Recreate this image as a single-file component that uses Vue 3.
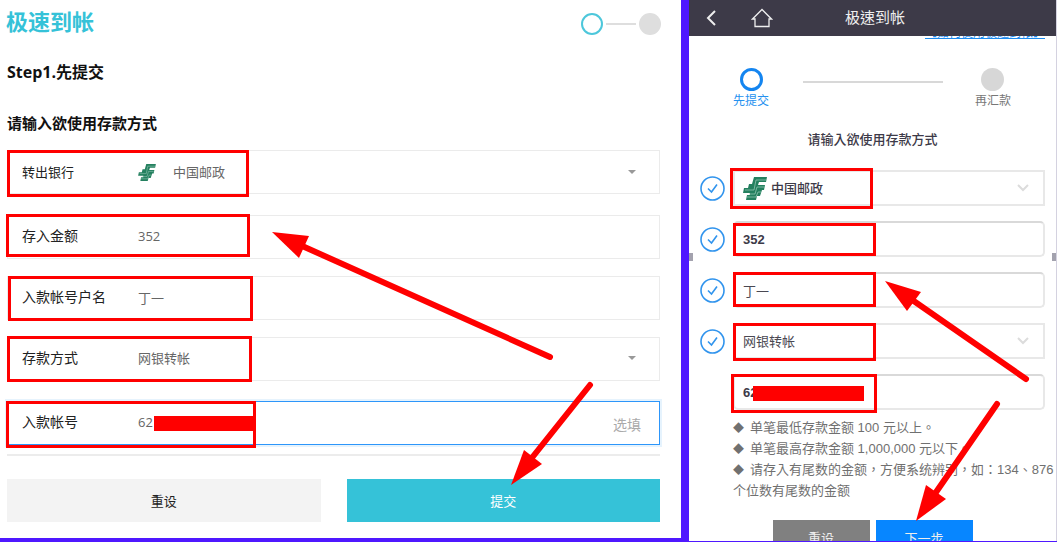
<script setup>
import { ref } from 'vue'

const desktopFields = ref([
  { id: 'd-bank', label: '转出银行', type: 'select', value: '中国邮政', bank: true },
  { id: 'd-amount', label: '存入金额', type: 'text', value: '352' },
  { id: 'd-name', label: '入款帐号户名', type: 'text', value: '丁一' },
  { id: 'd-method', label: '存款方式', type: 'select', value: '网银转帐' },
  { id: 'd-account', label: '入款帐号', type: 'text', value: '62', active: true, hint: '选填' },
])

const mobileFields = ref([
  { id: 'm-bank', label: '转出银行', type: 'select', value: '中国邮政', bank: true, checked: true },
  { id: 'm-amount', label: '存入金额', type: 'text', value: '352', checked: true },
  { id: 'm-name', label: '入款帐号户名', type: 'text', value: '丁一', checked: true, light: true },
  { id: 'm-method', label: '存款方式', type: 'select', value: '网银转帐', checked: true, light: true },
  { id: 'm-account', label: '入款帐号', type: 'text', value: '62' },
])

const frames = [
  [7, 150, 249, 197], [6, 214, 250, 257], [8, 276, 253, 321], [7, 336, 252, 382], [6, 401, 256, 448],
  [730, 168, 873, 209], [733, 223, 876, 256], [733, 272, 876, 307], [733, 323, 876, 361], [731, 374, 877, 413],
]
const arrows = [
  { line: [550, 357, 300, 245], head: '272,232 309,236 299,258' },
  { line: [590, 385, 527, 464], head: '511,485 524,450 542,464' },
  { line: [1026, 379, 908, 297], head: '885,281 921,292 907,311' },
  { line: [997, 404, 932, 498], head: '916,521 926,485 946,499' },
]
</script>

<template>
  <div class="page">
    <main class="desktop">
      <header class="top">
        <h1>极速到帐</h1>
        <div class="progress"><i class="dot on"></i><i class="link"></i><i class="dot"></i></div>
      </header>
      <h2>Step1.先提交</h2>
      <h3>请输入欲使用存款方式</h3>
      <form @submit.prevent>
        <div v-for="f in desktopFields" :key="f.id" class="field" :class="[f.id, { active: f.active }]">
          <label :for="f.id">{{ f.label }}</label>
          <svg v-if="f.bank" class="bank" viewBox="0 0 24 23" aria-hidden="true">
            <path class="mark" d="M11 0H24L23 5H16L15 8H22L21 13H19L17 19H14L13 23H3L4 18H7V16H0L1 11H5L6 7H9Z" />
            <path class="cut" d="M23 3H13L11 13H2M21 10H14L12 17H6M4 20H13L15 15H18" />
          </svg>
          <select v-if="f.type === 'select'" :id="f.id" v-model="f.value"><option>{{ f.value }}</option></select>
          <input v-else :id="f.id" v-model="f.value" type="text" />
          <i v-if="f.type === 'select'" class="caret"></i>
          <span v-if="f.hint" class="hint">{{ f.hint }}</span>
        </div>
        <hr />
        <div class="actions">
          <button type="reset">重设</button>
          <button type="submit" class="primary">提交</button>
        </div>
      </form>
    </main>

    <section class="mobile">
      <header class="bar">
        <button class="back" aria-label="返回">
          <svg width="12" height="18" viewBox="0 0 12 18"><path d="M10 2L3 9L10 16" /></svg>
        </button>
        <button class="home" aria-label="首页">
          <svg width="22" height="20" viewBox="0 0 22 20"><path d="M4 11H1.5L11 1.5L20.500 11H18V18.500H4Z" /></svg>
        </button>
        <strong>极速到帐</strong>
      </header>
      <div class="guide"><a href="#">【如何使用极速到帐】</a></div>
      <div class="steps">
        <div class="step on"><i></i><span>先提交</span></div>
        <i class="rule"></i>
        <div class="step"><i></i><span>再汇款</span></div>
      </div>
      <h3>请输入欲使用存款方式</h3>
      <form @submit.prevent>
        <div v-for="f in mobileFields" :key="f.id" class="row">
          <span class="tick">
            <svg v-if="f.checked" width="26" height="26" viewBox="0 0 26 26" aria-hidden="true">
              <circle cx="12.500" cy="13.500" r="11.500" /><path d="M8 13.500L11.500 17L17 9.500" />
            </svg>
          </span>
          <div class="box" :class="[f.type, { light: f.light }]">
            <svg v-if="f.bank" class="bank" viewBox="0 0 24 23" aria-hidden="true">
              <path class="mark" d="M11 0H24L23 5H16L15 8H22L21 13H19L17 19H14L13 23H3L4 18H7V16H0L1 11H5L6 7H9Z" />
              <path class="cut" d="M23 3H13L11 13H2M21 10H14L12 17H6M4 20H13L15 15H18" />
            </svg>
            <select v-if="f.type === 'select'" :id="f.id" v-model="f.value" :aria-label="f.label"><option>{{ f.value }}</option></select>
            <input v-else :id="f.id" v-model="f.value" type="text" :aria-label="f.label" />
            <svg v-if="f.type === 'select'" class="chev" width="12" height="8" viewBox="0 0 12 8"><path d="M1 1L6 6L11 1" /></svg>
          </div>
        </div>
        <div class="notes">
          <p><span class="gem">◆</span>单笔最低存款金额 100 元以上。</p>
          <p><span class="gem">◆</span>单笔最高存款金额 1,000,000 元以下。</p>
          <p><span class="gem">◆</span>请存入有尾数的金额，方便系统辨别，如：134、876<br />个位数有尾数的金额</p>
        </div>
        <div class="actions">
          <button type="reset">重设</button>
          <button type="submit" class="primary">下一步</button>
        </div>
      </form>
      <i class="grip left"></i>
      <i class="grip right"></i>
    </section>

    <svg class="marks" viewBox="0 0 1057 542" preserveAspectRatio="none" aria-hidden="true">
      <rect v-for="(b, i) in frames" :key="i" class="frame" :x="b[0] + 1.5" :y="b[1] + 1.5" :width="b[2] - b[0] - 3" :height="b[3] - b[1] - 3" />
      <rect class="solid" x="154" y="416" width="102" height="15" />
      <rect class="solid" x="753" y="386" width="111" height="15" />
      <g v-for="(a, i) in arrows" :key="'a' + i">
        <line :x1="a.line[0]" :y1="a.line[1]" :x2="a.line[2]" :y2="a.line[3]" />
        <polygon class="solid" :points="a.head" />
      </g>
    </svg>
  </div>
</template>

<style>
body { margin: 0; }
</style>

<style scoped>
* { box-sizing: border-box; }
.page {
  position: relative;
  display: grid;
  grid-template-columns: minmax(0, 681fr) 8px minmax(0, 368fr);
  height: 100vh;
  overflow: hidden;
  background: #4f18ff;
  font-family: "Open Sans", "Noto Sans CJK SC", sans-serif;
}
h1, h2, h3, p { margin: 0; }
button, input, select { font: inherit; color: inherit; border: 0; padding: 0; margin: 0; background: none; border-radius: 0; }
input, select { flex: 1; min-width: 0; appearance: none; outline: 0; height: 100%; opacity: 1; }

.desktop { background: #fff; padding: 7px 21px 0 6px; margin-bottom: 4px; }
.desktop form, .desktop h2, .desktop h3 { margin-left: 1px; }
.top { display: flex; justify-content: space-between; align-items: center; height: 28px; }
.top h1 { font-size: 22px; line-height: 28px; font-weight: 700; color: #35c2d8; }
.progress { display: flex; align-items: center; gap: 3px; padding-top: 6px; margin-right: -1px; }
.dot { width: 22px; height: 22px; border-radius: 50%; background: #dedede; }
.dot.on { background: #fff; border: 2px solid #4dc7db; }
.link { width: 30px; height: 2px; background: #dedede; }
.desktop h2 { margin-top: 25px; font-size: 16px; line-height: 24px; font-weight: 700; color: #111; }
.desktop h3 { margin-top: 27px; font-size: 15px; line-height: 24px; font-weight: 600; color: #111; }
.desktop form { margin-top: 15px; }
.field { display: flex; align-items: center; height: 44px; margin-bottom: 17px; padding: 0 18px 2px 14px; border: 1px solid #ebebeb; font-size: 13px; color: #666; }
.field.d-bank { margin-bottom: 21px; padding-bottom: 0; }
.field.d-method { margin-bottom: 20px; }
.field label { width: 116px; padding-bottom: 2px; font-size: 14px; color: #222; }
.field.d-bank label { font-size: 13px; }
.field.active { border-color: #2d96fa; box-shadow: 0 0 0 2px #e6f3fd; margin-bottom: 0; }
.field .bank { width: 18px; height: 17px; margin-right: 17px; }
.mark { fill: #24805f; }
.cut { fill: none; stroke: #8fc4b0; stroke-width: 0.8; }
.caret { border: 4px solid transparent; border-top-color: #999; border-bottom: 0; margin-right: 5px; }
.hint { padding-top: 4px; font-size: 14px; color: #aaa; }
hr { height: 2px; border: 0; margin: 9px 0 0; background: #ececec; }
.desktop .actions { display: grid; grid-template-columns: 1fr 1fr; gap: 26px; margin-top: 23px; }
.desktop .actions button { height: 43px; background: #f3f3f3; color: #222; font-size: 13px; }
.desktop .actions .primary { background: #35c2d8; color: #fff; }

.mobile { grid-column: 3; position: relative; overflow: hidden; margin-bottom: 1px; background: #fff; border-right: 1px solid #d4d2e0; color: #3d3a48; font-family: "Liberation Sans", "Noto Sans CJK TC", sans-serif; }
.bar { display: grid; grid-template-columns: 44px 58px 1fr; align-items: center; height: 36px; background: #3d3a48; color: #fff; }
.bar button { height: 36px; display: flex; align-items: center; justify-content: center; }
.bar path { fill: none; stroke: #eee; stroke-width: 2; }
.bar .home path { stroke-width: 1.300; }
.bar strong { font-size: 15px; line-height: 20px; font-weight: 400; color: #eee; padding-left: 54px; }
.guide { display: flex; justify-content: flex-end; align-items: flex-end; height: 5px; overflow: hidden; padding-right: 11px; }
.guide a { font-size: 12px; line-height: 16px; color: #1a8af0; white-space: nowrap; }
.steps { display: flex; justify-content: space-between; padding: 27px 45px 0 44px; }
.step { display: flex; flex-direction: column; align-items: center; gap: 1px; font-size: 12px; line-height: 18px; color: #777; }
.step i { width: 23px; height: 23px; border-radius: 50%; background: #d7d7d7; }
.step.on { color: #2591ef; }
.step.on i { background: #fff; border: 3px solid #1485f0; }
.rule { flex: 1; height: 2px; margin: 13px 32px 0 34px; background: #d8d8d8; }
.mobile h3 { margin-top: 20px; font-size: 13px; line-height: 20px; font-weight: 500; text-align: center; }
.mobile form { padding: 20px 11px 0; }
.row { display: grid; grid-template-columns: 33px 1fr; align-items: center; height: 36px; margin-bottom: 15px; }
.tick { height: 26px; }
.tick svg { display: block; fill: none; stroke: #3194ed; stroke-width: 1.600; }
.box { display: flex; align-items: center; height: 36px; padding: 0 14px 0 8px; border: 2px solid #e8e8e8; font-size: 13px; font-weight: 500; }
.box.text { border-radius: 5px; border-top-color: #d9d9d9; }
.box.text input { font-weight: 700; }
.box.light, .box.light.text input { font-weight: 400; color: #4a4852; }
.box .bank { width: 24px; height: 23px; margin-right: 4px; }
.chev path { fill: none; stroke: #dcdcdc; stroke-width: 2; }
.notes { margin: -8px 0 0 33px; font-size: 13px; line-height: 21px; color: #707070; white-space: nowrap; }
.gem { display: inline-block; width: 17px; font-size: 11px; line-height: 16px; }
.mobile .actions { display: flex; justify-content: center; gap: 6px; margin-top: 19px; }
.mobile .actions button { width: 97px; height: 34px; background: #808080; color: #eee; font-size: 13px; }
.mobile .actions .primary { background: #0786ff; }
.grip { position: absolute; top: 253px; width: 4px; height: 8px; background: #a3a2ae; }
.grip.left { left: 0; }
.grip.right { right: 0; }

.marks { position: absolute; inset: 0; width: 100%; height: 100%; pointer-events: none; }
.frame { fill: none; stroke: #f00; stroke-width: 3; }
.solid { fill: #f00; }
.marks line { stroke: #f00; stroke-width: 6; stroke-linecap: round; }
</style>
